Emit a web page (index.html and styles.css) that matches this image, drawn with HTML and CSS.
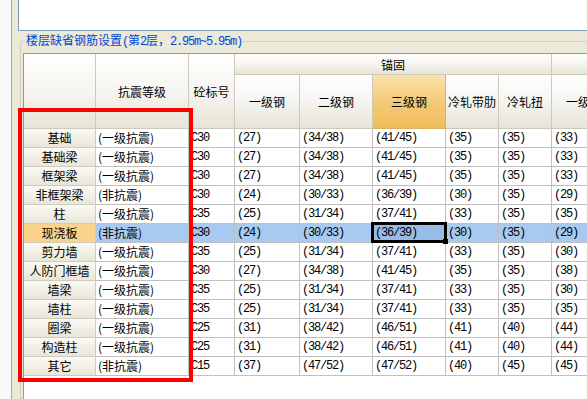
FILE: index.html
```html
<!DOCTYPE html>
<html>
<head>
<meta charset="utf-8">
<title>楼层缺省钢筋设置</title>
<link rel="stylesheet" href="styles.css">
</head>
<body>
<div class="panel">
	<div class="topbox"></div>
	<fieldset class="group">
		<legend>楼层缺省钢筋设置<span class="m">(</span>第<span class="m">2</span>层，<span class="m">2.95m~5.95m)</span></legend>
		<div class="grid">
			<div class="h corner"></div>
			<div class="h tall2">抗震等级</div>
			<div class="h tall3">砼标号</div>
			<div class="h anchor">锚固</div>
			<div class="h lap"></div>
			<div class="h">一级钢</div>
			<div class="h">二级钢</div>
			<div class="h hot">三级钢</div>
			<div class="h">冷轧带肋</div>
			<div class="h">冷轧扭</div>
			<div class="h">一级钢</div>

			<div class="rh">基础</div><div class="d">(一级抗震)</div><div class="d m">C30</div><div class="d m">(27)</div><div class="d m">(34/38)</div><div class="d m">(41/45)</div><div class="d m">(35)</div><div class="d m">(35)</div><div class="d m">(33)</div>
			<div class="rh">基础梁</div><div class="d">(一级抗震)</div><div class="d m">C30</div><div class="d m">(27)</div><div class="d m">(34/38)</div><div class="d m">(41/45)</div><div class="d m">(35)</div><div class="d m">(35)</div><div class="d m">(33)</div>
			<div class="rh">框架梁</div><div class="d">(一级抗震)</div><div class="d m">C30</div><div class="d m">(27)</div><div class="d m">(34/38)</div><div class="d m">(41/45)</div><div class="d m">(35)</div><div class="d m">(35)</div><div class="d m">(33)</div>
			<div class="rh">非框架梁</div><div class="d">(非抗震)</div><div class="d m">C30</div><div class="d m">(24)</div><div class="d m">(30/33)</div><div class="d m">(36/39)</div><div class="d m">(30)</div><div class="d m">(35)</div><div class="d m">(29)</div>
			<div class="rh">柱</div><div class="d">(一级抗震)</div><div class="d m">C35</div><div class="d m">(25)</div><div class="d m">(31/34)</div><div class="d m">(37/41)</div><div class="d m">(33)</div><div class="d m">(35)</div><div class="d m">(35)</div>
			<div class="rh hot">现浇板</div><div class="d s">(非抗震)</div><div class="d m s">C30</div><div class="d m s">(24)</div><div class="d m s">(30/33)</div><div class="d m cur">(36/39)</div><div class="d m s">(30)</div><div class="d m s">(35)</div><div class="d m s">(29)</div>
			<div class="rh">剪力墙</div><div class="d">(一级抗震)</div><div class="d m">C35</div><div class="d m">(25)</div><div class="d m">(31/34)</div><div class="d m">(37/41)</div><div class="d m">(33)</div><div class="d m">(35)</div><div class="d m">(30)</div>
			<div class="rh">人防门框墙</div><div class="d">(一级抗震)</div><div class="d m">C30</div><div class="d m">(27)</div><div class="d m">(34/38)</div><div class="d m">(41/45)</div><div class="d m">(35)</div><div class="d m">(35)</div><div class="d m">(38)</div>
			<div class="rh">墙梁</div><div class="d">(一级抗震)</div><div class="d m">C35</div><div class="d m">(25)</div><div class="d m">(31/34)</div><div class="d m">(37/41)</div><div class="d m">(33)</div><div class="d m">(35)</div><div class="d m">(30)</div>
			<div class="rh">墙柱</div><div class="d">(一级抗震)</div><div class="d m">C35</div><div class="d m">(25)</div><div class="d m">(31/34)</div><div class="d m">(37/41)</div><div class="d m">(33)</div><div class="d m">(35)</div><div class="d m">(35)</div>
			<div class="rh">圈梁</div><div class="d">(一级抗震)</div><div class="d m">C25</div><div class="d m">(31)</div><div class="d m">(38/42)</div><div class="d m">(46/51)</div><div class="d m">(41)</div><div class="d m">(40)</div><div class="d m">(44)</div>
			<div class="rh">构造柱</div><div class="d">(一级抗震)</div><div class="d m">C25</div><div class="d m">(31)</div><div class="d m">(38/42)</div><div class="d m">(46/51)</div><div class="d m">(41)</div><div class="d m">(40)</div><div class="d m">(44)</div>
			<div class="rh">其它</div><div class="d">(非抗震)</div><div class="d m">C15</div><div class="d m">(37)</div><div class="d m">(47/52)</div><div class="d m">(47/52)</div><div class="d m">(40)</div><div class="d m">(45)</div><div class="d m">(45)</div>
		</div>
	</fieldset>
</div>
<div class="mark"></div>
</body>
</html>
```
FILE: styles.css
```css
body {
	margin: 0;
	background-color: #fafaf8;
	font-family: "Noto Sans CJK SC", sans-serif;
	font-size: 12px;
	color: #000;
	overflow: hidden;
}
.panel {
	margin-left: 11px;
	height: 399px;
	border-left: 1px solid #a8a8a4;
	background-color: #ece9d8;
	overflow: hidden;
}
.topbox {
	margin-left: 6px;
	height: 30px;
	background-color: #fff;
	border-left: 1px solid #7f9db9;
	border-bottom: 1px solid #7f9db9;
}
.group {
	margin: 2px 0 0 8px;
	padding: 4px 0 0 2px;
	min-width: 0;
	width: 700px;
	height: 500px;
	border: 1px solid #d0d0bf;
	border-radius: 3px;
}
legend {
	margin-left: 2px;
	padding: 0 1px;
	color: #0046d5;
	line-height: 14px;
}
.m {
	font-family: "Liberation Mono", monospace;
	letter-spacing: -1.2px;
}
.grid {
	display: grid;
	grid-template-columns: 72px 93px 46px 65px 73px 73px 53px 53px 65px;
	grid-template-rows: 21px 54px repeat(13, 19px);
	align-content: start;
	height: 420px;
	background-color: #fff;
	border-top: 1px solid #7f9db9;
	border-left: 1px solid #7f9db9;
}
.grid > div {
	box-sizing: border-box;
	border-right: 1px solid #c0c0c0;
	border-bottom: 1px solid #c0c0c0;
	white-space: nowrap;
	overflow: hidden;
}
.h {
	display: flex;
	align-items: center;
	justify-content: center;
	background: linear-gradient(#fff, #f4f3ee 55%, #e7e4d6);
	border-color: #cdcabb !important;
}
.corner, .tall2, .tall3 {
	grid-row: 1 / span 2;
}
.anchor {
	grid-column: 4 / span 5;
}
.lap {
	grid-column: 9;
}
.h.hot {
	background: linear-gradient(#fbe2ab, #f3c670 60%, #f0bd5c);
	border-color: #e0b260 !important;
}
.rh {
	text-align: center;
	line-height: 18px;
	background: linear-gradient(#faf9f4, #e9e6d8);
	border-color: #cfccbe !important;
}
.rh.hot {
	background: #fbd28c;
}
.d {
	padding-left: 2px;
	line-height: 18px;
}
.s {
	background-color: #a8caf0;
}
.cur {
	position: relative;
	z-index: 1;
	overflow: visible !important;
	background-color: #98bce8;
}
.cur::after {
	content: "";
	position: absolute;
	left: -2px;
	top: -2px;
	right: -2px;
	bottom: -1px;
	border: 3px solid #000;
}
.cur::before {
	content: "";
	position: absolute;
	right: -3px;
	bottom: -2px;
	width: 5px;
	height: 5px;
	background-color: #000;
	z-index: 1;
}
.mark {
	position: absolute;
	left: 18px;
	top: 108px;
	width: 175px;
	height: 274px;
	box-sizing: border-box;
	border: 4px solid #f00;
}
```
